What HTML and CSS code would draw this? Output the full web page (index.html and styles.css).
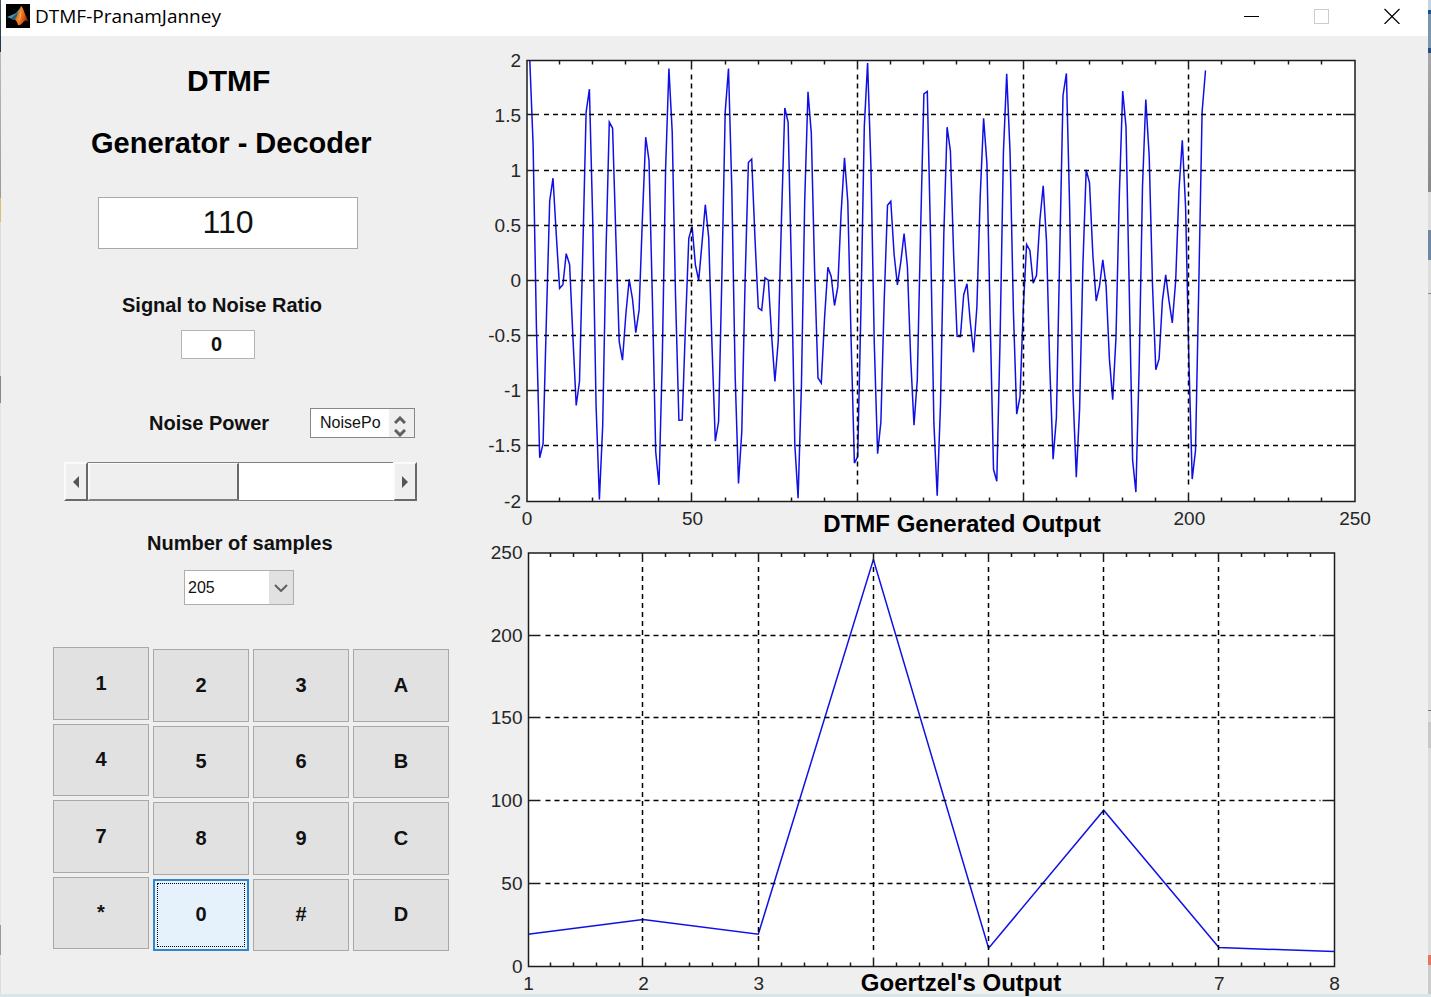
FILE: index.html
```html
<!DOCTYPE html>
<html lang="en">
<head>
<meta charset="utf-8">
<title>DTMF-PranamJanney</title>
<link rel="stylesheet" href="styles.css">
</head>
<body>
<div class="desktop">
  <div class="window">
    <header class="titlebar">
      <svg class="app-icon" viewBox="0 0 24 24" aria-hidden="true">
        <defs>
          <linearGradient id="flame" x1="0" y1="0" x2="1" y2="0.4">
            <stop offset="0" stop-color="#7a2a10"/>
            <stop offset="0.45" stop-color="#f08a2c"/>
            <stop offset="0.7" stop-color="#e8641c"/>
            <stop offset="1" stop-color="#8c2808"/>
          </linearGradient>
        </defs>
        <rect width="24" height="24" fill="#000"/>
        <path d="M1 13 7 10.500 10 9 14 4 13 10 9 15 7.500 16 5 14.500Z" fill="#4c93b4"/>
        <path d="M5 14.500 9 11 12 8 11 12 7.500 16Z" fill="#235a74"/>
        <path d="M15 2C17 3 18 8 20 12 21 15 22 17 23 18 20 15.500 18.500 16 16.500 19 14.500 21 13 21.500 12 21 11.500 18 10 16.500 8.500 15.500 11 13.500 13 6 15 2Z" fill="url(#flame)"/>
        <path d="M15 6C15.500 9 15 14 13 18 13.500 14 14 10 15 6Z" fill="#ffb050"/>
      </svg>
      <h1 class="window-title">DTMF-PranamJanney</h1>
      <div class="window-controls">
        <button class="window-button" type="button" aria-label="Minimize">
          <svg viewBox="0 0 16 16" aria-hidden="true"><path d="M0 8.500H15" stroke="#000"/></svg>
        </button>
        <button class="window-button" type="button" aria-label="Maximize" disabled>
          <svg viewBox="0 0 16 16" aria-hidden="true"><rect x="0.500" y="1.500" width="14" height="14" fill="none" stroke="#ccc"/></svg>
        </button>
        <button class="window-button" type="button" aria-label="Close">
          <svg viewBox="0 0 16 16" aria-hidden="true"><path d="M0.500 1 15.500 16M15.500 1 0.500 16" stroke="#000" stroke-width="1.200"/></svg>
        </button>
      </div>
    </header>

    <main class="content">
      <section class="controls">
        <h2 class="heading heading-main">DTMF</h2>
        <h2 class="heading heading-sub">Generator - Decoder</h2>
        <input class="dialed" type="text" value="110" aria-label="Dialed number">

        <label class="label snr-label" for="snr">Signal to Noise Ratio</label>
        <input class="snr" id="snr" type="text" value="0">

        <div class="noise-row">
          <label class="label" for="noise">Noise Power</label>
          <div class="spin">
            <input class="spin-text" id="noise" type="text" value="NoisePo">
            <div class="spin-buttons">
              <button type="button" aria-label="Up"><svg viewBox="0 0 12 8" aria-hidden="true"><path d="M1 7 6 2 11 7"/></svg></button>
              <button type="button" aria-label="Down"><svg viewBox="0 0 12 8" aria-hidden="true"><path d="M1 1 6 6 11 1"/></svg></button>
            </div>
          </div>
        </div>

        <div class="scroll">
          <button class="scroll-arrow" type="button" aria-label="Decrease"><svg viewBox="0 0 8 12" aria-hidden="true"><path d="M7 0V12L1 6Z"/></svg></button>
          <input class="scroll-range" type="range" min="0" max="100" value="0" aria-label="Noise power level">
          <button class="scroll-arrow" type="button" aria-label="Increase"><svg viewBox="0 0 8 12" aria-hidden="true"><path d="M1 0V12L7 6Z"/></svg></button>
        </div>

        <label class="label samples-label" for="samples">Number of samples</label>
        <div class="combo">
          <select id="samples"><option>205</option></select>
          <span class="combo-arrow"><svg viewBox="0 0 14 8" aria-hidden="true"><path d="M1 1 7 7 13 1"/></svg></span>
        </div>

        <div class="keypad">
          <div class="key-column">
            <button type="button">1</button><button type="button">4</button><button type="button">7</button><button type="button">*</button>
          </div>
          <div class="key-column">
            <button type="button">2</button><button type="button">5</button><button type="button">8</button><button type="button" class="is-active">0</button>
          </div>
          <div class="key-column">
            <button type="button">3</button><button type="button">6</button><button type="button">9</button><button type="button">#</button>
          </div>
          <div class="key-column">
            <button type="button">A</button><button type="button">B</button><button type="button">C</button><button type="button">D</button>
          </div>
        </div>
      </section>

      <section class="plots">
        <svg class="plot" id="signal-plot" viewBox="481 36 947 502" role="img" aria-label="DTMF Generated Output"></svg>
        <svg class="plot" id="goertzel-plot" viewBox="481 538 947 456" role="img" aria-label="Goertzel's Output"></svg>
      </section>
    </main>
  </div>
</div>
<script src="script.js"></script>
</body>
</html>
```
FILE: styles.css
```css
* {
  box-sizing: border-box;
}

body {
  margin: 0;
  font-family: "Liberation Sans", Arial, sans-serif;
  color: #111;
}

button,
input,
select {
  margin: 0;
  padding: 0;
  font-family: inherit;
  color: inherit;
  border-radius: 0;
  outline: none;
}

.desktop {
  min-height: 100vh;
  padding: 0 3px 3px 1px;
  background:
    linear-gradient(#c3d3df 0 10px, #1f4f8a 10px 14px, #7d96ad 14px 48px, #1f4f8a 48px 53px, #a8a8a8 53px, #888 192px, #ddd 192px 230px, #6f87a0 230px 260px, #ddd 260px 293px, #888 293px 294px, #ddd 294px 710px, #777 710px 711px, #ddd 711px 722px, #c8c8c8 722px 748px, #ddd 748px 955px, #e07858 955px 965px, #ccc 965px) right top / 3px calc(100% - 3px) no-repeat,
    linear-gradient(#456 0, #234 52px, #bbb 52px, #999 198px, #d8c070 198px 222px, #ddd 222px 376px, #888 376px 403px, #e4e4e4 403px 925px, #999 925px 955px, #ddd 955px) left top / 1px calc(100% - 3px) no-repeat,
    #d6e6ea;
}

.window {
  background: #efefef;
}

.titlebar {
  display: flex;
  align-items: center;
  height: 36px;
  padding: 0 20px 4px 5px;
  background: #fff;
}

.app-icon {
  width: 24px;
  height: 24px;
}

.window-title {
  flex: 1;
  margin: 0 0 0 5px;
  font: 400 19px/28px "Open Sans", "Noto Sans", sans-serif;
  color: #000;
}

.window-controls {
  display: flex;
  gap: 38px;
}

.window-button {
  width: 32px;
  height: 32px;
  padding: 0 8px;
  border: 0;
  background: none;
}

.window-button svg {
  display: block;
  width: 16px;
  height: 16px;
}

.content {
  display: grid;
  grid-template-columns: 480px 1fr;
}

.controls {
  display: flex;
  flex-direction: column;
  align-items: flex-start;
  padding: 27px 0 0 52px;
}

.heading {
  margin: 0;
  line-height: 36px;
  font-weight: 700;
  color: #000;
}

.heading-main {
  margin-left: 134px;
  font-size: 30px;
}

.heading-sub {
  margin: 26px 0 0 38px;
  font-size: 29px;
}

.dialed {
  width: 260px;
  height: 52px;
  margin: 36px 0 0 45px;
  padding-bottom: 2px;
  border: 1px solid #a9a9a9;
  background: #fff;
  font-size: 32px;
  text-align: center;
}

.label {
  font-size: 20px;
  font-weight: 700;
  line-height: 24px;
}

.snr-label {
  margin: 44px 0 0 69px;
}

.snr {
  width: 74px;
  height: 29px;
  margin: 13px 0 0 128px;
  padding-right: 3px;
  border: 1px solid #b4b4b4;
  background: #fff;
  font-size: 20px;
  font-weight: 700;
  text-align: center;
}

.noise-row {
  display: flex;
  align-items: center;
  gap: 41px;
  margin: 49px 0 0 96px;
}

.spin {
  display: flex;
  width: 105px;
  height: 30px;
  border: 1px solid #828790;
  background: #fff;
}

.spin-text {
  flex: 1;
  min-width: 0;
  height: 28px;
  padding-left: 9px;
  border: 0;
  background: none;
  font-size: 16px;
}

.spin-buttons {
  display: flex;
  flex-direction: column;
  justify-content: flex-end;
  gap: 5px;
  width: 25px;
  background: #efefef;
}

.spin-buttons button {
  height: 8px;
  border: 0;
  background: none;
}

.spin-buttons svg {
  display: block;
  width: 12px;
  height: 8px;
  margin-left: 5px;
}

.spin-buttons path {
  fill: none;
  stroke: #606060;
  stroke-width: 3;
}

.scroll {
  display: flex;
  width: 353px;
  height: 39px;
  margin: 24px 0 0 11px;
}

.scroll-arrow {
  width: 24px;
  border: solid;
  border-width: 2px;
  border-color: #fafafa #696969 #696969 #fafafa;
  background: #efefef;
}

.scroll-arrow svg {
  display: block;
  width: 8px;
  height: 12px;
  margin: 0 auto;
  fill: #555;
}

.scroll-range {
  flex: 1;
  min-width: 0;
  height: 39px;
  border: solid #808080;
  border-width: 1px 0;
  background: #fff;
  appearance: none;
}

.scroll-range::-webkit-slider-thumb {
  width: 151px;
  height: 37px;
  border: solid;
  border-width: 1px 2px 1px 2px;
  border-color: #fafafa #696969 #808080 #fafafa;
  background: #efefef;
  appearance: none;
}

.samples-label {
  margin: 30px 0 0 94px;
}

.combo {
  position: relative;
  width: 110px;
  height: 35px;
  margin: 15px 0 0 131px;
}

.combo select {
  width: 100%;
  height: 100%;
  padding-left: 3px;
  border: 1px solid #adadad;
  background: #fff;
  font-size: 16px;
  appearance: none;
}

.combo-arrow {
  position: absolute;
  top: 1px;
  right: 1px;
  bottom: 1px;
  display: flex;
  align-items: center;
  justify-content: center;
  width: 24px;
  background: #e1e1e1;
  pointer-events: none;
}

.combo-arrow svg {
  width: 14px;
  height: 8px;
  fill: none;
  stroke: #606060;
  stroke-width: 2;
}

.keypad {
  display: grid;
  grid-template-columns: repeat(4, 1fr);
  align-items: end;
  gap: 4px;
  width: 396px;
  height: 304px;
  margin-top: 42px;
}

.key-column {
  display: grid;
  grid-template-rows: repeat(4, 1fr);
  gap: 4px;
  height: 302px;
}

.key-column:first-child {
  align-self: start;
}

.key-column button {
  border: 1px solid #a8a8a8;
  background: #e1e1e1;
  font-size: 20px;
  font-weight: 700;
}

.key-column .is-active {
  border: 2px solid #2f86cf;
  background: #e5f1fb;
  outline: 1px dotted #000;
  outline-offset: -5px;
}

.plots {
  min-width: 0;
}

.plot {
  display: block;
  width: 100%;
  height: auto;
  overflow: visible;
}

.plot-area {
  fill: #fff;
}

.axis,
.tick {
  fill: none;
  stroke: #1c1c1c;
  stroke-width: 1.5px;
}

.grid-line {
  fill: none;
  stroke: #000;
  stroke-width: 1.5px;
  stroke-dasharray: 5 4;
}

.curve {
  fill: none;
  stroke: #1010e6;
  stroke-width: 1.5px;
}

.tick-label {
  font-size: 19px;
  fill: #262626;
}

.caption {
  font-size: 24px;
  font-weight: 700;
  fill: #000;
}
```
FILE: script.js
```js
const SVG_NS = "http://www.w3.org/2000/svg";

function add(parent, name, attributes, text) {
  const node = document.createElementNS(SVG_NS, name);
  for (const key in attributes) node.setAttribute(key, attributes[key]);
  if (text !== undefined) node.textContent = text;
  parent.appendChild(node);
  return node;
}

// Grid and tick lines sit on half pixels so that they stay sharp.
const snap = (v) => Math.floor(v - 0.7) + 0.5;

function drawPlot(id, options) {
  const svg = document.getElementById(id);
  const { left, right, top, bottom, xRange, yRange } = options;
  const px = (v) => left + (v - xRange[0]) / (xRange[1] - xRange[0]) * (right - left);
  const py = (v) => bottom - (v - yRange[0]) / (yRange[1] - yRange[0]) * (bottom - top);

  add(svg, "rect", { class: "plot-area", x: left, y: top, width: right - left, height: bottom - top });
  const points = options.data.map(([x, y]) => (px(x) - 0.5).toFixed(1) + "," + py(y).toFixed(1));
  add(svg, "polyline", { class: "curve", points: points.join(" ") });

  let ticks = "";
  for (let i = 1; i < options.minorCount; i++) {
    const x = snap(left + (right - left) * i / options.minorCount);
    const length = i % 5 === 0 ? 9 : 4;
    ticks += `M${x} ${top}v${length}M${x} ${bottom}v${-length}`;
    if (i % 5 === 0) add(svg, "path", { class: "grid-line", d: `M${x} ${top + 14}V${bottom - 14}` });
  }
  for (const v of options.yTicks) {
    const y = py(v);
    if (v !== yRange[0] && v !== yRange[1]) {
      const line = snap(y);
      ticks += `M${left} ${line}h12M${right} ${line}h-12`;
      add(svg, "path", { class: "grid-line", d: `M${left + 17} ${line}H${right - 14}` });
    }
    add(svg, "text", { class: "tick-label", x: left - 6, y: y + 6, "text-anchor": "end" }, v);
  }
  add(svg, "path", { class: "tick", d: ticks });
  add(svg, "rect", { class: "axis", x: left, y: top, width: right - left, height: bottom - top });

  for (const v of options.xLabels) {
    add(svg, "text", { class: "tick-label", x: px(v), y: options.labelBase, "text-anchor": "middle" }, v);
  }
  add(svg, "text", { class: "caption", x: options.captionX, y: options.captionBase, "text-anchor": "middle" }, options.caption);
}

const SAMPLE_RATE = 8000;
const SAMPLES = 205;
const LOW_TONE = 941;
const HIGH_TONE = 1336;
const signal = Array.from({ length: SAMPLES }, (_, n) => {
  const t = 2 * Math.PI * n / SAMPLE_RATE;
  return [n + 1, Math.cos(LOW_TONE * t) + Math.cos(HIGH_TONE * t)];
});

drawPlot("signal-plot", {
  left: 527, right: 1355, top: 60.5, bottom: 501.5,
  xRange: [0, 250], yRange: [-2, 2], minorCount: 25,
  xLabels: [0, 50, 200, 250],
  yTicks: [-2, -1.5, -1, -0.5, 0, 0.5, 1, 1.5, 2],
  labelBase: 525, caption: "DTMF Generated Output", captionX: 962, captionBase: 532,
  data: signal
});

drawPlot("goertzel-plot", {
  left: 528.5, right: 1334.5, top: 553, bottom: 966.5,
  xRange: [1, 8], yRange: [0, 250], minorCount: 35,
  xLabels: [1, 2, 3, 7, 8],
  yTicks: [0, 50, 100, 150, 200, 250],
  labelBase: 990, caption: "Goertzel's Output", captionX: 961, captionBase: 991,
  data: [[1, 19.5], [2, 28.5], [3, 19.5], [4, 246], [5, 11], [6, 94.5], [7, 11.5], [8, 9]]
});
```
